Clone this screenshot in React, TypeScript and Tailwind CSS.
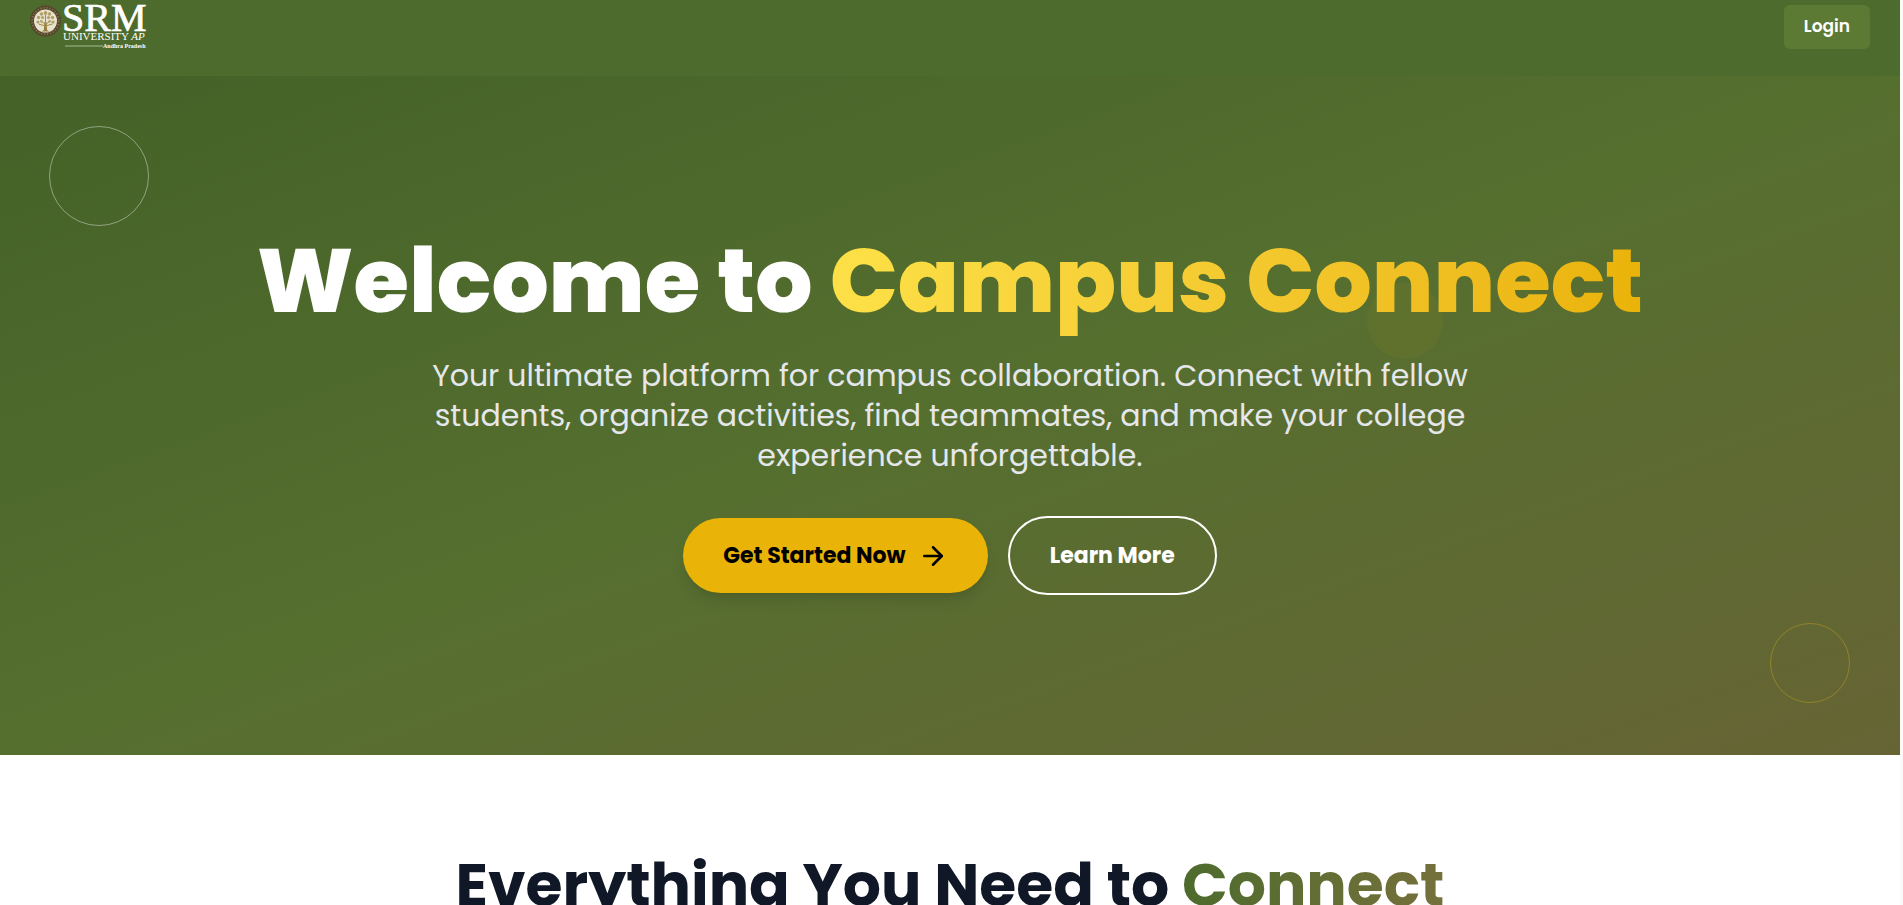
import { ArrowRight } from "lucide-react";

function Logo() {
  return (
    <a href="#" aria-label="SRM University AP" className="block">
      <svg width="120" height="50" viewBox="0 0 120 50" aria-hidden="true">
        <circle cx="17.500" cy="21" r="15.500" fill="#55462a" />
        <circle cx="17.500" cy="21" r="13.300" fill="none" stroke="#a3956c" strokeWidth="2" strokeDasharray="1.4 1.6" opacity="0.5" />
        <circle cx="17.500" cy="21" r="11.500" fill="#e8e3d1" />
        <path d="M16.500 22h2l.6 8 2.400 1.600h-8l2.400-1.600z" fill="#94803c" />
        <path d="M17.500 25l-5-5M17.500 25l5-5M17.500 24v-9M17.500 26l-7-2M17.500 26l7-2" stroke="#a08a45" strokeWidth="1" fill="none" />
        <g fill="#b3a066">
          <circle cx="17.500" cy="13" r="1.900" /><circle cx="13.500" cy="14" r="1.800" /><circle cx="21.500" cy="14" r="1.800" />
          <circle cx="10.500" cy="17.500" r="1.700" /><circle cx="24.500" cy="17.500" r="1.700" /><circle cx="14.500" cy="17.500" r="1.600" />
          <circle cx="20.500" cy="17.500" r="1.600" /><circle cx="10" cy="22" r="1.600" /><circle cx="25" cy="22" r="1.600" />
          <circle cx="13.500" cy="21.500" r="1.300" /><circle cx="21.500" cy="21.500" r="1.300" />
        </g>
        <g fill="#fff" fontFamily="'Liberation Serif', serif">
          <text x="34" y="31" fontSize="40" stroke="#fff" strokeWidth="0.7">SRM</text>
          <text x="35" y="40" fontSize="11">UNIVERSITY <tspan fontStyle="italic">AP</tspan></text>
          <text x="75" y="48" fontSize="6" fontWeight="700">Andhra Pradesh</text>
        </g>
        <path d="M37 46h38" stroke="#86a070" strokeWidth="1.500" />
      </svg>
    </a>
  );
}

export default function App() {
  return (
    <div className="h-screen overflow-hidden bg-[#fafafa] pr-[3px] font-['Poppins','Inter',sans-serif]">
      <div className="bg-white">
        <header className="flex h-[76px] items-start justify-between bg-[#4d6b2d] pr-[30px] pl-7">
          <Logo />
          <button type="button" className="mt-[5px] h-11 rounded-md bg-[#5c7a33] px-5 text-[17px] font-semibold text-white">
            Login
          </button>
        </header>

        <section className="relative overflow-hidden bg-linear-to-br from-[#446127] via-[#556f2f] to-[#666434] pt-40 pb-40 text-center">
          <span className="absolute top-[50px] left-[49px] size-[100px] rounded-full border border-white/40" />
          <span className="absolute top-[207px] right-[457px] size-[76px] rounded-full bg-yellow-500/5" />
          <span className="absolute right-[50px] bottom-[52px] size-[80px] rounded-full border border-[#d5b01c]/40" />

          <div className="relative flex flex-col items-center">
            <h1 className="text-[90px] leading-[90px] font-extrabold whitespace-nowrap text-white">
              Welcome to{" "}
              <span className="bg-linear-to-r from-[#fde047] to-[#eab308] bg-clip-text text-transparent">Campus Connect</span>
            </h1>
            <p className="mt-[30px] max-w-[1100px] text-[30px] leading-10 text-gray-200">
              Your ultimate platform for campus collaboration. Connect with fellow
              <br />
              students, organize activities, find teammates, and make your college
              <br />
              experience unforgettable.
            </p>
            <div className="mt-10 flex items-center gap-5">
              <button type="button" className="flex h-[75px] items-center gap-3 rounded-full bg-[#eab308] px-10 text-[22px] font-bold text-black shadow-lg">
                Get Started Now
                <ArrowRight size={30} />
              </button>
              <button type="button" className="h-[79px] rounded-full border-2 border-white px-10 text-[22px] font-bold text-white">
                Learn More
              </button>
            </div>
          </div>
        </section>

        <section className="pt-[100px] text-center">
          <h2 className="text-[60px] leading-[60px] font-bold whitespace-nowrap text-gray-900">
            Everything You Need to{" "}
            <span className="bg-linear-to-r from-[#4d6b2d] to-[#75703c] bg-clip-text text-transparent">Connect</span>
          </h2>
        </section>
      </div>
    </div>
  );
}
